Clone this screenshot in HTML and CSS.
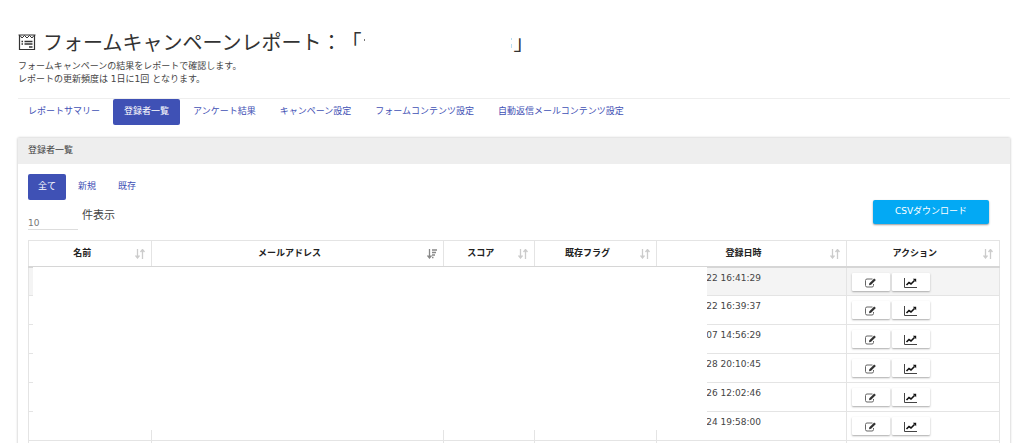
FILE: index.html
```html
<!DOCTYPE html>
<html lang="ja">
<head>
<meta charset="utf-8">
<meta name="viewport" content="width=device-width, initial-scale=1">
<title>フォームキャンペーンレポート</title>
<link rel="stylesheet" href="styles.css">
</head>
<body>
<svg class="defs" aria-hidden="true">
  <symbol id="sort" viewBox="0 0 10 10"><path d="M2.5 0v8M.5 6.500l2 2.500 2-2.500M7.500 10V1.500M5.500 3l2-2.500L9.500 3" fill="none" stroke="currentColor" stroke-width="1.300"/></symbol>
  <symbol id="sort-desc" viewBox="0 0 10 10"><path d="M2.500 0v8M.5 6.500l2 2.500 2-2.500M5 1h5M5 3.500h4M5 6h3M5 8.500h1.500" fill="none" stroke="currentColor" stroke-width="1.300"/></symbol>
  <symbol id="edit" viewBox="0 0 12 10"><path d="M8 1H2.500Q1 1 1 2.500v5Q1 9 2.500 9h5Q9 9 9 7.500V6" fill="none" stroke="#666" stroke-width="1"/><path d="M4.500 7.200l.4-2L9.700.5l1.700 1.600-4.800 4.700z" fill="#333"/></symbol>
  <symbol id="chart" viewBox="0 0 13 10"><path d="M.5 0v9.500H13" fill="none" stroke="#444"/><path d="M2.500 7l2.500-2.500 2 1.500L10.500 2.500" fill="none" stroke="#111" stroke-width="1.600"/><path d="M8.800.8h3.400v3.400z" fill="#111"/></symbol>
</svg>
<main class="page">
  <header class="intro">
    <h1 class="title">
      <svg class="title-icon" viewBox="0 0 18 17" aria-hidden="true"><path d="M1.500 1v14.500h15V1M.5 1h17" fill="none" stroke="#333" stroke-width="1.200"/><path d="M2 1.500l2 2.500 2.500-2.500L9 4l2.500-2.500L14 4l2-2.500" fill="none" stroke="#333"/><path d="M3.500 7.500H5M6.500 7.500h8M3.500 10H5M6.500 10h8M11 13h3.500" stroke="#333" stroke-width="1.300"/></svg>
      <span>フォームキャンペーンレポート：「</span><span class="name-mask"></span><span>」</span>
    </h1>
    <p class="lead">フォームキャンペーンの結果をレポートで確認します。<br>レポートの更新頻度は 1日に1回 となります。</p>
  </header>
  <nav class="tabs">
    <a class="tab" href="#">レポートサマリー</a>
    <a class="tab active" href="#">登録者一覧</a>
    <a class="tab" href="#">アンケート結果</a>
    <a class="tab" href="#">キャンペーン設定</a>
    <a class="tab" href="#">フォームコンテンツ設定</a>
    <a class="tab" href="#">自動返信メールコンテンツ設定</a>
  </nav>
  <section class="card">
    <h2 class="card-title">登録者一覧</h2>
    <div class="card-body">
      <div class="filters">
        <a class="filter active" href="#">全て</a>
        <a class="filter" href="#">新規</a>
        <a class="filter" href="#">既存</a>
      </div>
      <div class="tools">
        <div class="length">
          <select class="count" id="count"><option>10</option></select>
          <label for="count">件表示</label>
        </div>
        <button class="csv" type="button">CSVダウンロード</button>
      </div>
      <div class="table-wrap">
        <table class="list">
          <colgroup><col class="c-name"><col class="c-mail"><col class="c-score"><col class="c-flag"><col class="c-date"><col class="c-action"></colgroup>
          <thead>
            <tr>
              <th><div class="head"><span>名前</span><svg><use href="#sort"/></svg></div></th>
              <th><div class="head sorted"><span>メールアドレス</span><svg><use href="#sort-desc"/></svg></div></th>
              <th><div class="head"><span>スコア</span><svg><use href="#sort"/></svg></div></th>
              <th><div class="head"><span>既存フラグ</span><svg><use href="#sort"/></svg></div></th>
              <th><div class="head"><span>登録日時</span><svg><use href="#sort"/></svg></div></th>
              <th><div class="head"><span>アクション</span><svg><use href="#sort"/></svg></div></th>
            </tr>
          </thead>
          <tbody>
            <tr class="hover"><td></td><td></td><td></td><td></td><td class="date">22 16:41:29</td><td><div class="actions"><button type="button" aria-label="編集"><svg><use href="#edit"/></svg></button><button type="button" aria-label="グラフ"><svg><use href="#chart"/></svg></button></div></td></tr>
            <tr><td></td><td></td><td></td><td></td><td class="date">22 16:39:37</td><td><div class="actions"><button type="button" aria-label="編集"><svg><use href="#edit"/></svg></button><button type="button" aria-label="グラフ"><svg><use href="#chart"/></svg></button></div></td></tr>
            <tr><td></td><td></td><td></td><td></td><td class="date">07 14:56:29</td><td><div class="actions"><button type="button" aria-label="編集"><svg><use href="#edit"/></svg></button><button type="button" aria-label="グラフ"><svg><use href="#chart"/></svg></button></div></td></tr>
            <tr><td></td><td></td><td></td><td></td><td class="date">28 20:10:45</td><td><div class="actions"><button type="button" aria-label="編集"><svg><use href="#edit"/></svg></button><button type="button" aria-label="グラフ"><svg><use href="#chart"/></svg></button></div></td></tr>
            <tr><td></td><td></td><td></td><td></td><td class="date">26 12:02:46</td><td><div class="actions"><button type="button" aria-label="編集"><svg><use href="#edit"/></svg></button><button type="button" aria-label="グラフ"><svg><use href="#chart"/></svg></button></div></td></tr>
            <tr><td></td><td></td><td></td><td></td><td class="date">24 19:58:00</td><td><div class="actions"><button type="button" aria-label="編集"><svg><use href="#edit"/></svg></button><button type="button" aria-label="グラフ"><svg><use href="#chart"/></svg></button></div></td></tr>
            <tr><td></td><td></td><td></td><td></td><td></td><td></td></tr>
          </tbody>
        </table>
        <div class="mask"></div>
      </div>
    </div>
  </section>
</main>
</body>
</html>
```
FILE: styles.css
```css
* { box-sizing: border-box; }
body {
  margin: 0;
  background: #fff;
  color: #444;
  font: 9px/13px "DejaVu Sans", "Noto Sans CJK JP", sans-serif;
}
.defs { position: absolute; width: 0; height: 0; }
.page { padding: 28px 20px 0 18px; height: 100vh; overflow: hidden; }
.title {
  display: flex;
  align-items: center;
  margin: 0;
  color: #333;
  font: 400 20px/28px "Noto Sans CJK JP", sans-serif;
  text-spacing-trim: space-all;
}
.title-icon { width: 18px; height: 17px; margin-right: 7px; }
.name-mask {
  width: 152px;
  height: 28px;
  background:
    linear-gradient(#777, #777) 3px 11px / 1px 2px no-repeat,
    linear-gradient(#b9def2, #b9def2) 150px 10px / 1px 2px no-repeat,
    linear-gradient(#b9def2, #b9def2) 150px 16px / 1px 4px no-repeat;
}
.lead { margin: 4px 0 0; }
.tabs {
  display: flex;
  gap: 2px;
  margin-top: 12px;
  border-top: 1px solid #eee;
}
.tab, .filter {
  padding: 6px 11px 7px;
  border-radius: 2px;
  color: #3f51b5;
  text-decoration: none;
  white-space: nowrap;
}
.filter { padding: 6px 10px 7px; }
.tab:first-child { padding-left: 10px; }
.tabs .active, .filters .active { background: #3f51b5; color: #fff; }
.card {
  margin-top: 13px;
  border-radius: 2px;
  box-shadow: 0 0 2px 1px #ddd;
}
.card-title {
  margin: 0;
  padding: 6px 10px 7px;
  background: #eee;
  font-size: 9px;
  font-weight: 400;
}
.card-body { padding: 10px 10px 20px; }
.filters { display: flex; gap: 2px; }
.tools {
  display: flex;
  align-items: flex-start;
  justify-content: space-between;
  padding-right: 11px;
}
.length { display: flex; gap: 4px; padding-top: 8px; font-size: 11px; line-height: 16px; }
.count {
  appearance: none;
  width: 50px;
  height: 14px;
  margin-top: 8px;
  padding: 0;
  border: 0;
  border-bottom: 1px solid #ddd;
  border-radius: 0;
  background: transparent;
  color: #777;
  font: 9px/12px "DejaVu Sans", sans-serif;
}
.csv {
  width: 116px;
  height: 24px;
  padding: 0 0 2px;
  border: 0;
  border-radius: 2px;
  background: #03a9f4;
  box-shadow: 0 1px 2px #999;
  color: #fff;
  font: inherit;
}
.table-wrap { position: relative; margin-top: 10px; }
.list {
  width: 100%;
  border-collapse: collapse;
  table-layout: fixed;
  border: 1px solid #e4e4e4;
}
.c-name { width: 12.7%; }
.c-mail { width: 30%; }
.c-score { width: 9.4%; }
.c-flag { width: 12.6%; }
.c-date { width: 19.5%; }
.list th, .list td { padding: 0; border-left: 1px solid #e4e4e4; border-top: 1px solid #e4e4e4; }
.list th { height: 26px; border-bottom: 2px solid #d6d6d6; color: #222; }
.list td { height: 29px; vertical-align: top; }
.head { display: flex; align-items: center; padding-right: 6px; }
.head span { flex: 1; }
.head svg { width: 10px; height: 10px; margin-top: 1px; color: #ccc; }
.sorted svg { color: #888; }
.hover { background: #f4f4f4; }
.list .date { padding: 4px 0 0 49px; color: #444; }
.actions { display: flex; gap: 2px; padding: 5px 0 0 5px; }
.actions button {
  display: flex;
  align-items: center;
  justify-content: center;
  width: 38px;
  height: 18px;
  padding: 2px 0 0;
  border: 0;
  border-radius: 1px;
  background: #fff;
  box-shadow: 0 1px 2px #aaa;
}
.actions svg { width: 13px; height: 10px; }
.mask {
  position: absolute;
  top: 27px;
  left: 5px;
  width: 69.3%;
  height: 163px;
  background: #fff;
}
```
